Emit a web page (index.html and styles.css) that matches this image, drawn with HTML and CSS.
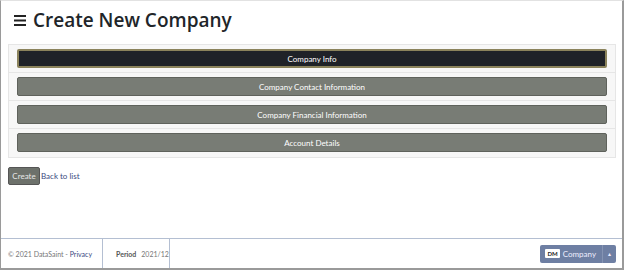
FILE: index.html
```html
<!DOCTYPE html>
<html>
<head>
<link rel="stylesheet" href="styles.css">
</head>
<body>

<div class="frame">
  <main class="content">
    <h1 class="title">
      <svg class="burger" width="12" height="11" viewBox="0 0 12 11">
        <rect x="0" y="0" width="12" height="2" fill="#222"/>
        <rect x="0" y="4.5" width="12" height="2" fill="#222"/>
        <rect x="0" y="9" width="12" height="2" fill="#222"/>
      </svg>
      Create New Company
    </h1>

    <div class="accordion">
      <div class="card"><button class="sect active">Company Info</button></div>
      <div class="card"><button class="sect">Company Contact Information</button></div>
      <div class="card"><button class="sect">Company Financial Information</button></div>
      <div class="card"><button class="sect">Account Details</button></div>
    </div>

    <div class="actions">
      <button class="create">Create</button>
      <a class="back" href="#">Back to list</a>
    </div>
  </main>

  <footer class="footer">
    <div class="copy"><span>&copy; 2021 DataSaint - <a href="#">Privacy</a></span></div>
    <div class="period"><b>Period</b><span>2021/12</span></div>
    <div class="spacer"></div>
    <div class="company">
      <span class="main"><span class="dm">DM</span>Company</span>
      <span class="caret">&#9652;</span>
    </div>
  </footer>
</div>

</body>
</html>
```

FILE: styles.css
```css
html, body {
  margin: 0;
  height: 100%;
}

body {
  font-family: Lato, "Open Sans", sans-serif;
  background: #fff;
}

.frame {
  box-sizing: border-box;
  height: 270px;
  border: 1px solid #9a9a9a;
  border-top-color: #e2e2e2;
  border-right-width: 2px;
  border-bottom-width: 2px;
  display: flex;
  flex-direction: column;
}

.content {
  flex: 1;
  padding: 0 6px 0 7px;
}

.title {
  display: flex;
  align-items: center;
  gap: 7px;
  margin: 7px 0 0 6px;
  height: 24px;
  font-family: "Open Sans", sans-serif;
  font-size: 19px;
  font-weight: 600;
  color: #212529;
}

.accordion {
  margin-top: 12px;
  border: 1px solid #e6e6e6;
}

.card {
  background: #f7f7f7;
  border-bottom: 1px solid #e6e6e6;
  padding: 4px 8px 4px 8px;
  height: 19px;
}

.card:last-child {
  border-bottom: none;
  height: 20px;
}

.sect {
  display: block;
  width: 100%;
  height: 19px;
  font-family: inherit;
  font-size: 8px;
  color: #fff;
  background: #787c75;
  border: 1px solid #5f625c;
  border-radius: 2px;
  padding: 0;
}

.active {
  background: #1f2228;
  border: 2px solid #8b835c;
}

.actions {
  display: flex;
  align-items: center;
  margin-top: 9px;
  gap: 1px;
}

.create {
  font-family: inherit;
  font-size: 8px;
  color: #e8e8e8;
  background: #6d716b;
  border: 1px solid #555;
  border-radius: 2px;
  height: 18px;
  width: 32px;
  padding: 0;
}

.back {
  font-size: 8px;
  color: #3b4a80;
  text-decoration: none;
}

.footer {
  display: flex;
  align-items: center;
  height: 29px;
  border-top: 1px solid #b4bfd2;
  font-size: 7px;
  color: #777;
  white-space: nowrap;
}

.copy {
  box-sizing: border-box;
  width: 102px;
  padding-left: 7px;
  height: 100%;
  display: flex;
  align-items: center;
  border-right: 1px solid #b4bfd2;
}

.copy a {
  color: #3b4a80;
  text-decoration: none;
}

.period {
  box-sizing: border-box;
  width: 67px;
  padding-left: 13px;
  height: 100%;
  display: flex;
  align-items: center;
  gap: 5px;
  border-right: 1px solid #b4bfd2;
}

.period b {
  color: #555;
}

.spacer {
  flex: 1;
}

.company {
  display: flex;
  height: 18px;
  margin-right: 6px;
  background: #6e7fa3;
  border-radius: 2px;
  color: #eef;
  font-size: 8px;
}

.main {
  display: flex;
  align-items: center;
  gap: 3px;
  padding: 0 6px 0 5px;
  border-right: 1px solid #8594b3;
}

.dm {
  background: #fff;
  color: #222;
  font-size: 6px;
  font-weight: 700;
  padding: 1px 2px;
  border-radius: 1px;
}

.caret {
  display: flex;
  align-items: center;
  padding: 0 5px;
  font-size: 6px;
}
```
